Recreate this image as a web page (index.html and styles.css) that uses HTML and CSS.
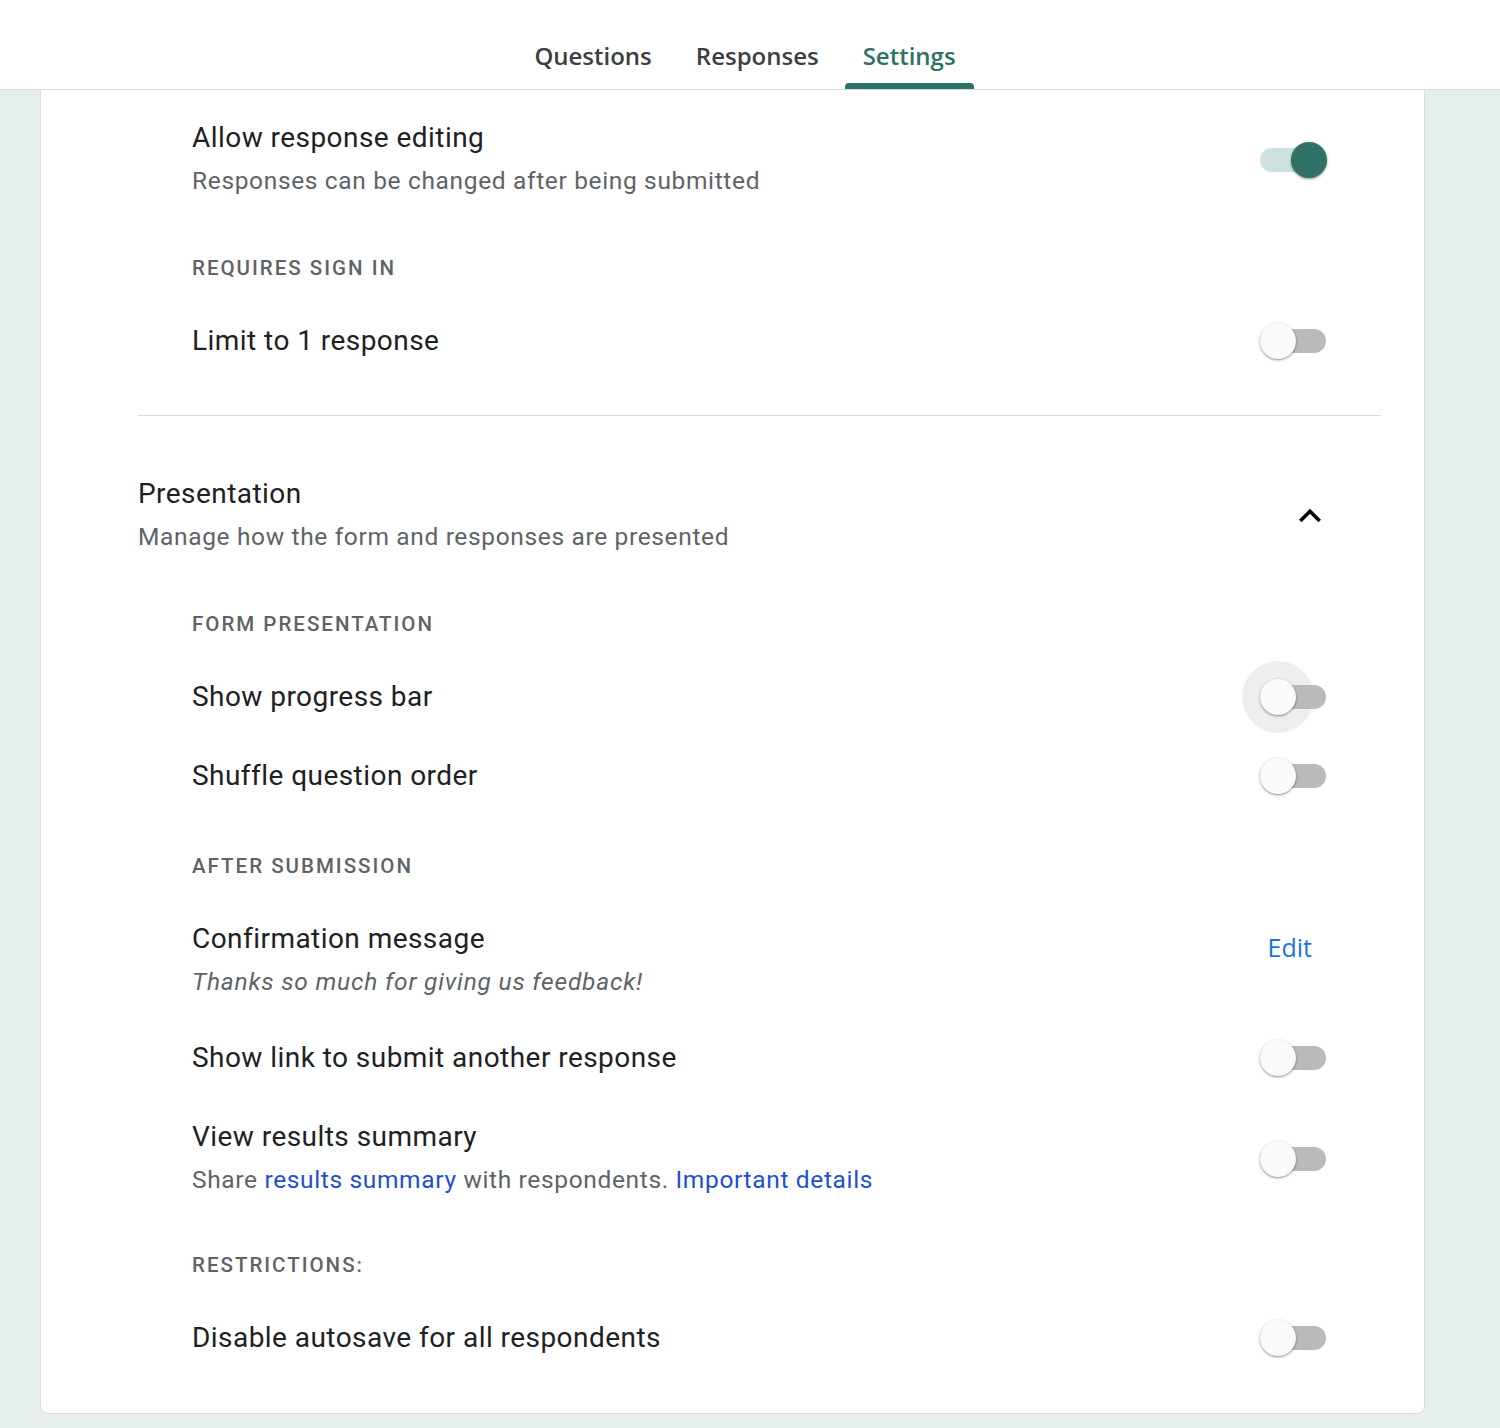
FILE: index.html
```html
<!DOCTYPE html>
<html lang="en">
<head>
<meta charset="utf-8">
<title>Settings</title>
<link rel="stylesheet" href="styles.css">
</head>
<body>
<header class="topbar">
  <nav class="tabs">
    <a class="tab">Questions</a>
    <a class="tab">Responses</a>
    <a class="tab active">Settings</a>
  </nav>
</header>
<main class="card">
  <div class="sub">
    <div class="row">
      <div class="text">
        <div class="title">Allow response editing</div>
        <div class="desc">Responses can be changed after being submitted</div>
      </div>
      <span class="toggle on"><span class="track"></span><span class="knob"></span></span>
    </div>
    <div class="label">REQUIRES SIGN IN</div>
    <div class="row">
      <div class="text"><div class="title">Limit to 1 response</div></div>
      <span class="toggle"><span class="track"></span><span class="knob"></span></span>
    </div>
  </div>

  <hr class="divider">

  <section class="section">
    <div class="section-head">
      <div class="text">
        <div class="title">Presentation</div>
        <div class="desc">Manage how the form and responses are presented</div>
      </div>
      <svg class="chevron" viewBox="0 0 24 24" width="44" height="44" aria-hidden="true"><path d="M12 8l-6 6 1.41 1.41L12 10.83l4.59 4.58L18 14z" fill="#000"/></svg>
    </div>

    <div class="sub">
      <div class="label">FORM PRESENTATION</div>
      <div class="row">
        <div class="text"><div class="title">Show progress bar</div></div>
        <span class="toggle"><span class="halo"></span><span class="track"></span><span class="knob"></span></span>
      </div>
      <div class="row">
        <div class="text"><div class="title">Shuffle question order</div></div>
        <span class="toggle"><span class="track"></span><span class="knob"></span></span>
      </div>

      <div class="label wide">AFTER SUBMISSION</div>
      <div class="row top">
        <div class="text">
          <div class="title">Confirmation message</div>
          <div class="desc italic">Thanks so much for giving us feedback!</div>
        </div>
        <a class="edit">Edit</a>
      </div>
      <div class="row after-two">
        <div class="text"><div class="title">Show link to submit another response</div></div>
        <span class="toggle"><span class="track"></span><span class="knob"></span></span>
      </div>
      <div class="row">
        <div class="text">
          <div class="title">View results summary</div>
          <div class="desc">Share <a class="link">results summary</a> with respondents. <a class="link">Important details</a></div>
        </div>
        <span class="toggle"><span class="track"></span><span class="knob"></span></span>
      </div>

      <div class="label narrow">RESTRICTIONS:</div>
      <div class="row">
        <div class="text"><div class="title">Disable autosave for all respondents</div></div>
        <span class="toggle"><span class="track"></span><span class="knob"></span></span>
      </div>
    </div>
  </section>
</main>
</body>
</html>
```
FILE: styles.css
```css
* { box-sizing: border-box; }

html, body {
  margin: 0;
  padding: 0;
}

body {
  background: #e7efed;
  font-family: Roboto, "Liberation Sans", Arial, sans-serif;
  color: #202124;
  min-height: 1428px;
}

.topbar {
  background: #fff;
  height: 90px;
  border-bottom: 1px solid #dadce0;
  display: flex;
  justify-content: center;
}

.tabs {
  display: flex;
  gap: 8px;
  margin-left: -10px;
}

.tab {
  position: relative;
  height: 89px;
  padding: 21px 18px 0;
  display: flex;
  align-items: center;
  font-family: "Open Sans", Roboto, sans-serif;
  font-weight: 600;
  font-size: 24px;
  color: #3c4043;
  cursor: pointer;
}

.tab.active {
  color: #2d7266;
}

.tab.active::after {
  content: "";
  position: absolute;
  left: 0;
  right: 0;
  bottom: 0;
  height: 6px;
  background: #2d7266;
  border-radius: 4px 4px 0 0;
}

.card {
  margin-left: 40px;
  width: 1385px;
  background: #fff;
  border: 1px solid #dadce0;
  border-top: none;
  border-radius: 0 0 8px 8px;
  padding: 30px 43px 57px 97px;
}

.sub {
  padding-left: 54px;
  padding-right: 54px;
}

.row {
  display: flex;
  align-items: center;
  justify-content: space-between;
  margin-top: 43px;
}

.sub > .row:first-child { margin-top: 0; }

.label + .row { margin-top: 37px; }

.row.after-two { margin-top: 40px; }

.row.top { align-items: flex-start; }

.title {
  font-size: 28px;
  line-height: 36px;
  letter-spacing: 0.45px;
  color: #202124;
}

.desc {
  font-size: 24.5px;
  line-height: 36px;
  margin-top: 7px;
  color: #5f6368;
  letter-spacing: 0.65px;
}

.desc.italic { font-style: italic; letter-spacing: 0.8px; }

.label {
  margin-top: 51px;
  font-size: 20.5px;
  line-height: 36px;
  font-weight: 500;
  letter-spacing: 2px;
  color: #5f6368;
}

.label.wide { margin-top: 54px; }
.label.narrow { margin-top: 49px; }

.link {
  color: #1f4fcf;
  cursor: pointer;
}

.edit {
  margin-top: 8px;
  margin-right: 15px;
  font-family: "Open Sans", Roboto, sans-serif;
  font-size: 25px;
  line-height: 36px;
  color: #1a73e8;
  cursor: pointer;
}

.divider {
  margin: 56px 0 0;
  border: none;
  border-top: 1px solid #dadce0;
  height: 0;
}

.section-head {
  margin-top: 60px;
  display: flex;
  align-items: center;
  justify-content: space-between;
}

.chevron {
  margin-right: 49px;
  flex-shrink: 0;
}

.section .sub .label:first-child { margin-top: 51px; }

.toggle {
  position: relative;
  width: 67px;
  height: 36px;
  flex-shrink: 0;
}

.toggle .track {
  position: absolute;
  left: 0;
  right: 1px;
  top: 6px;
  height: 24px;
  border-radius: 12px;
  background: #bababa;
}

.toggle .knob {
  position: absolute;
  top: 0;
  left: 0;
  width: 36px;
  height: 36px;
  border-radius: 50%;
  background: #fafafa;
  box-shadow: 0 1px 3px rgba(0,0,0,0.35), 0 1px 1px rgba(0,0,0,0.12);
}

.toggle.on .track { background: #cde2df; }

.toggle.on .knob {
  left: auto;
  right: 0;
  background: #2e7268;
}

.toggle .halo {
  position: absolute;
  left: -18px;
  top: -18px;
  width: 72px;
  height: 72px;
  border-radius: 50%;
  background: #eeeeee;
}
```
